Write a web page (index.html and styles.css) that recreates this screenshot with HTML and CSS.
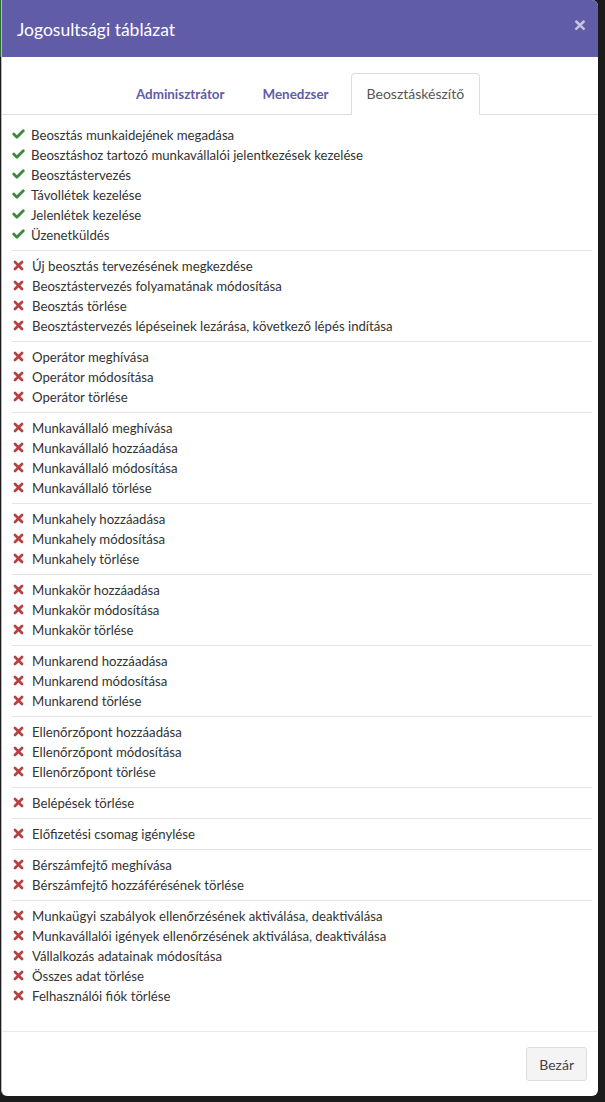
FILE: index.html
```html
<!DOCTYPE html>
<html lang="hu">
<head>
<meta charset="utf-8">
<title>Jogosultsági táblázat</title>
<link rel="stylesheet" href="styles.css">
</head>
<body>
<svg class="defs" width="0" height="0" aria-hidden="true">
  <symbol id="i-ok" viewBox="0 0 12 9"><polyline points="1.6,4.6 4.5,7.4 10.4,1.6" fill="none" stroke="currentColor" stroke-width="2.6" stroke-linecap="round" stroke-linejoin="round"/></symbol>
  <symbol id="i-no" viewBox="0 0 10 10"><path d="M1.8 1.8 L8.2 8.2 M8.2 1.8 L1.8 8.2" fill="none" stroke="currentColor" stroke-width="2.5" stroke-linecap="round"/></symbol>
</svg>
<div class="backdrop-strip"></div>
<div class="modal">
  <div class="modal-header">
    <h4 class="modal-title">Jogosultsági táblázat</h4>
    <span class="close">&times;</span>
  </div>
  <div class="modal-body">
    <ul class="tabs">
      <li class="tab"><a>Adminisztrátor</a></li>
      <li class="tab"><a>Menedzser</a></li>
      <li class="tab active"><a>Beosztáskészítő</a></li>
    </ul>
    <div class="perm-list">
      <ul class="group">
        <li class="ok"><svg class="ic"><use href="#i-ok"/></svg>Beosztás munkaidejének megadása</li>
        <li class="ok"><svg class="ic"><use href="#i-ok"/></svg>Beosztáshoz tartozó munkavállalói jelentkezések kezelése</li>
        <li class="ok"><svg class="ic"><use href="#i-ok"/></svg>Beosztástervezés</li>
        <li class="ok"><svg class="ic"><use href="#i-ok"/></svg>Távollétek kezelése</li>
        <li class="ok"><svg class="ic"><use href="#i-ok"/></svg>Jelenlétek kezelése</li>
        <li class="ok"><svg class="ic"><use href="#i-ok"/></svg>Üzenetküldés</li>
      </ul>
      <hr>
      <ul class="group">
        <li class="no"><svg class="ic"><use href="#i-no"/></svg>Új beosztás tervezésének megkezdése</li>
        <li class="no"><svg class="ic"><use href="#i-no"/></svg>Beosztástervezés folyamatának módosítása</li>
        <li class="no"><svg class="ic"><use href="#i-no"/></svg>Beosztás törlése</li>
        <li class="no"><svg class="ic"><use href="#i-no"/></svg>Beosztástervezés lépéseinek lezárása, következő lépés indítása</li>
      </ul>
      <hr>
      <ul class="group">
        <li class="no"><svg class="ic"><use href="#i-no"/></svg>Operátor meghívása</li>
        <li class="no"><svg class="ic"><use href="#i-no"/></svg>Operátor módosítása</li>
        <li class="no"><svg class="ic"><use href="#i-no"/></svg>Operátor törlése</li>
      </ul>
      <hr>
      <ul class="group">
        <li class="no"><svg class="ic"><use href="#i-no"/></svg>Munkavállaló meghívása</li>
        <li class="no"><svg class="ic"><use href="#i-no"/></svg>Munkavállaló hozzáadása</li>
        <li class="no"><svg class="ic"><use href="#i-no"/></svg>Munkavállaló módosítása</li>
        <li class="no"><svg class="ic"><use href="#i-no"/></svg>Munkavállaló törlése</li>
      </ul>
      <hr>
      <ul class="group">
        <li class="no"><svg class="ic"><use href="#i-no"/></svg>Munkahely hozzáadása</li>
        <li class="no"><svg class="ic"><use href="#i-no"/></svg>Munkahely módosítása</li>
        <li class="no"><svg class="ic"><use href="#i-no"/></svg>Munkahely törlése</li>
      </ul>
      <hr>
      <ul class="group">
        <li class="no"><svg class="ic"><use href="#i-no"/></svg>Munkakör hozzáadása</li>
        <li class="no"><svg class="ic"><use href="#i-no"/></svg>Munkakör módosítása</li>
        <li class="no"><svg class="ic"><use href="#i-no"/></svg>Munkakör törlése</li>
      </ul>
      <hr>
      <ul class="group">
        <li class="no"><svg class="ic"><use href="#i-no"/></svg>Munkarend hozzáadása</li>
        <li class="no"><svg class="ic"><use href="#i-no"/></svg>Munkarend módosítása</li>
        <li class="no"><svg class="ic"><use href="#i-no"/></svg>Munkarend törlése</li>
      </ul>
      <hr>
      <ul class="group">
        <li class="no"><svg class="ic"><use href="#i-no"/></svg>Ellenőrzőpont hozzáadása</li>
        <li class="no"><svg class="ic"><use href="#i-no"/></svg>Ellenőrzőpont módosítása</li>
        <li class="no"><svg class="ic"><use href="#i-no"/></svg>Ellenőrzőpont törlése</li>
      </ul>
      <hr>
      <ul class="group">
        <li class="no"><svg class="ic"><use href="#i-no"/></svg>Belépések törlése</li>
      </ul>
      <hr>
      <ul class="group">
        <li class="no"><svg class="ic"><use href="#i-no"/></svg>Előfizetési csomag igénylése</li>
      </ul>
      <hr>
      <ul class="group">
        <li class="no"><svg class="ic"><use href="#i-no"/></svg>Bérszámfejtő meghívása</li>
        <li class="no"><svg class="ic"><use href="#i-no"/></svg>Bérszámfejtő hozzáférésének törlése</li>
      </ul>
      <hr>
      <ul class="group">
        <li class="no"><svg class="ic"><use href="#i-no"/></svg>Munkaügyi szabályok ellenőrzésének aktiválása, deaktiválása</li>
        <li class="no"><svg class="ic"><use href="#i-no"/></svg>Munkavállalói igények ellenőrzésének aktiválása, deaktiválása</li>
        <li class="no"><svg class="ic"><use href="#i-no"/></svg>Vállalkozás adatainak módosítása</li>
        <li class="no"><svg class="ic"><use href="#i-no"/></svg>Összes adat törlése</li>
        <li class="no"><svg class="ic"><use href="#i-no"/></svg>Felhasználói fiók törlése</li>
      </ul>
    </div>
  </div>
  <div class="modal-footer">
    <button class="btn">Bezár</button>
  </div>
</div>
</body>
</html>
```

FILE: styles.css
```css
html, body {
  margin: 0;
  padding: 0;
}
body {
  background: #1b1b1b;
  font-family: "Lato", "Open Sans", sans-serif;
  font-size: 14px;
  color: #333;
  width: 605px;
  height: 1102px;
  overflow: hidden;
  position: relative;
}
.defs {
  position: absolute;
  width: 0;
  height: 0;
}
.backdrop-strip {
  position: absolute;
  left: 0;
  top: 0;
  width: 1px;
  height: 57px;
  background: #2f6b2f;
}
.modal {
  margin-left: 1px;
  width: 597px;
  height: 1096px;
  background: #fff;
  border-left: 1px solid #bbb;
  box-sizing: border-box;
  border-radius: 0 6px 6px 6px;
  overflow: hidden;
  display: flex;
  flex-direction: column;
}
.modal-header {
  background: #605ca8;
  height: 57px;
  box-sizing: border-box;
  padding: 0 15px;
  display: flex;
  align-items: center;
  justify-content: space-between;
  flex-shrink: 0;
}
.modal-title {
  margin: 0;
  color: #fff;
  font-size: 17.5px;
  font-weight: normal;
  line-height: 1;
  position: relative;
  top: 1px;
}
.close {
  color: #fff;
  opacity: 0.65;
  font-size: 21px;
  font-weight: bold;
  line-height: 1;
  margin-right: -3px;
  position: relative;
  top: -4px;
  font-family: "Liberation Sans", sans-serif;
}
.modal-body {
  flex: 1;
  padding-top: 16px;
}
.tabs {
  list-style: none;
  margin: 0;
  padding: 0;
  display: flex;
  justify-content: center;
  border-bottom: 1px solid #ddd;
  padding-left: 6px;
}
.tab a {
  display: block;
  padding: 0 15px;
  height: 40px;
  line-height: 40px;
  border: 1px solid transparent;
  border-bottom: none;
  border-radius: 4px 4px 0 0;
  margin-right: 6px;
  color: #605ca8;
  font-weight: 700;
  font-size: 13.4px;
}
.tab.active a {
  color: #555;
  font-weight: normal;
  font-size: 14px;
  background: #fff;
  border-color: #ddd;
  margin-bottom: -1px;
  height: 41px;
}
.perm-list {
  padding: 10px 6px 0 10px;
}
.group {
  list-style: none;
  margin: 0;
  padding: 0;
}
.group li {
  height: 20px;
  line-height: 20px;
  display: flex;
  align-items: center;
  font-size: 13.2px;
  white-space: nowrap;
}
.ic {
  flex-shrink: 0;
}
.ok .ic {
  width: 13px;
  height: 10px;
  margin-right: 6px;
  color: #3b8a3b;
  position: relative;
  top: -1px;
}
.no .ic {
  width: 11px;
  height: 11px;
  margin-right: 8px;
  margin-left: 1px;
  color: #b5403d;
  position: relative;
  top: -1px;
}
hr {
  border: 0;
  border-top: 1px solid #e3e3e3;
  margin: 5px 0;
  height: 0;
}
.modal-footer {
  flex-shrink: 0;
  border-top: 1px solid #e9e9e9;
  padding: 15px 11px 15px 15px;
  display: flex;
  justify-content: flex-end;
}
.btn {
  height: 34px;
  padding: 0 12px;
  background: #f4f4f4;
  border: 1px solid #ddd;
  border-radius: 3px;
  color: #444;
  font-family: inherit;
  font-size: 14px;
}
```
